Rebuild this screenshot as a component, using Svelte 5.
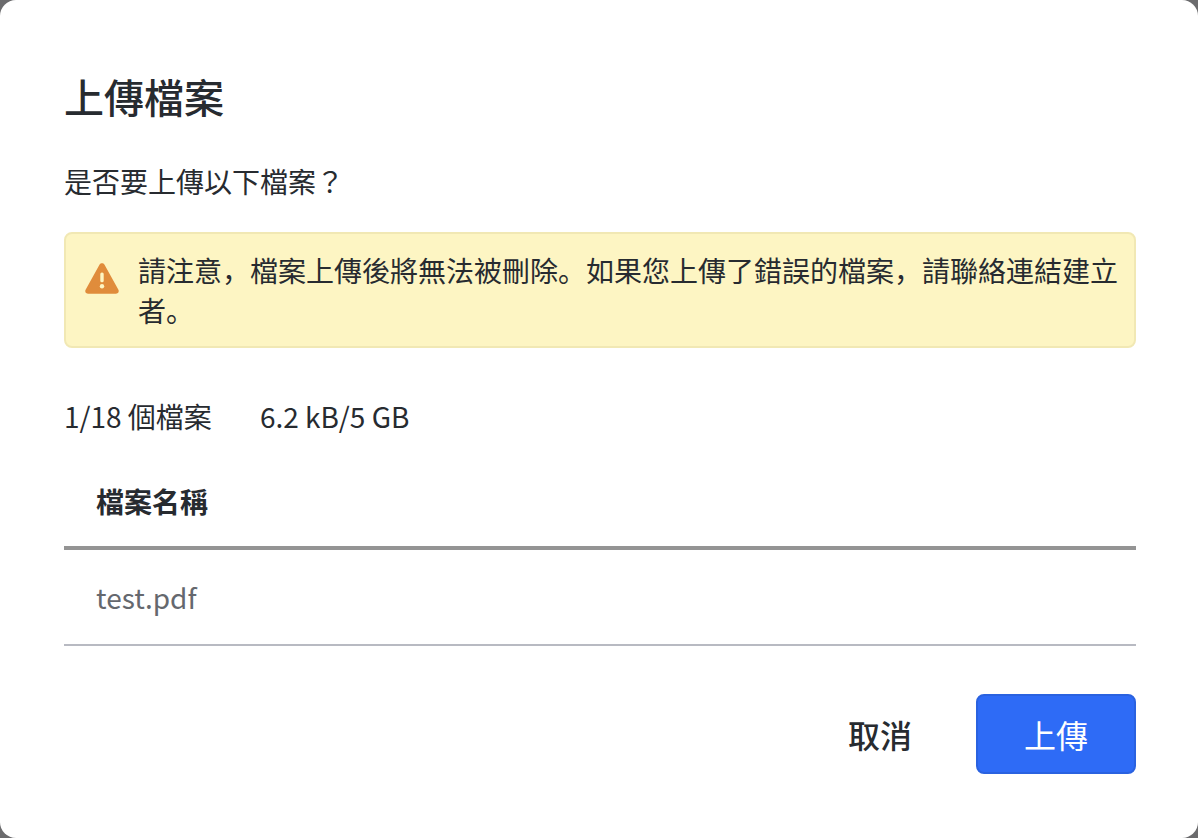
<script>
  let files = [{ name: 'test.pdf' }]
</script>

<div class="backdrop">
  <section class="dialog">
    <h1>上傳檔案</h1>
    <p class="question">是否要上傳以下檔案？</p>

    <div class="alert">
      <svg class="icon" viewBox="0 0 36 36" width="36" height="36" aria-hidden="true">
        <path d="M18 3.2c1 0 1.9.5 2.4 1.4l14 25.2c1 1.8-.3 3.9-2.4 3.9H4c-2.1 0-3.4-2.1-2.4-3.9l14-25.2c.5-.9 1.4-1.4 2.4-1.4z" fill="#e08c3b"/>
        <rect x="16.3" y="12.6" width="3.4" height="9.6" rx="1.5" fill="#fdf5c3"/>
        <circle cx="18" cy="26.2" r="2.2" fill="#fdf5c3"/>
      </svg>
      <span>請注意，檔案上傳後將無法被刪除。如果您上傳了錯誤的檔案，請聯絡連結建立者。</span>
    </div>

    <div class="stats">
      <span>1/18 個檔案</span>
      <span>6.2 kB/5 GB</span>
    </div>

    <table>
      <thead>
        <tr><th>檔案名稱</th></tr>
      </thead>
      <tbody>
        {#each files as file}
          <tr><td>{file.name}</td></tr>
        {/each}
      </tbody>
    </table>

    <footer>
      <button class="cancel">取消</button>
      <button class="upload">上傳</button>
    </footer>
  </section>
</div>

<style>
  :global(body) {
    margin: 0;
  }

  .backdrop {
    width: 1198px;
    height: 838px;
    background: #6b6b6d;
    overflow: hidden;
  }

  .dialog {
    box-sizing: border-box;
    width: 1198px;
    height: 838px;
    padding: 68px 62px 0 64px;
    background: #fff;
    border-radius: 16px;
    color: #272b30;
    font-family: "Noto Sans CJK SC", "Noto Sans", sans-serif;
    font-size: 28px;
    line-height: 40px;
  }

  h1 {
    margin: 0;
    font-size: 40px;
    line-height: 56px;
    font-weight: 500;
  }

  .question {
    margin: 37px 0 0;
    font-family: "Noto Sans CJK TC", "Noto Sans", sans-serif;
  }

  .alert {
    display: flex;
    align-items: flex-start;
    gap: 18px;
    box-sizing: border-box;
    height: 116px;
    margin-top: 31px;
    padding: 16px 12px 18px 18px;
    background: #fdf5c3;
    border: 2px solid #f1e8b4;
    border-radius: 8px;
  }

  .icon {
    flex: none;
    margin-top: 10px;
  }

  .stats {
    display: flex;
    gap: 48px;
    margin-top: 48px;
  }

  table {
    width: 100%;
    margin-top: 23px;
    border-collapse: collapse;
  }

  th {
    height: 89px;
    padding: 0 32px 4px;
    box-sizing: border-box;
    text-align: left;
    font-weight: 700;
    border-bottom: 4px solid #949494;
  }

  td {
    height: 97px;
    padding: 0 32px 1px;
    box-sizing: border-box;
    color: #65686e;
    border-bottom: 2px solid #b8bac2;
  }

  footer {
    display: flex;
    justify-content: flex-end;
    align-items: center;
    gap: 32px;
    margin-top: 48px;
  }

  button {
    box-sizing: border-box;
    width: 160px;
    height: 80px;
    padding: 0;
    font: inherit;
    font-size: 32px;
    border-radius: 8px;
    cursor: pointer;
  }

  .cancel {
    width: 128px;
    background: none;
    border: none;
    color: #272b30;
    font-weight: 500;
  }

  .upload {
    background: #2e6bf6;
    border: 2px solid #2a62e0;
    color: #fff;
  }
</style>
